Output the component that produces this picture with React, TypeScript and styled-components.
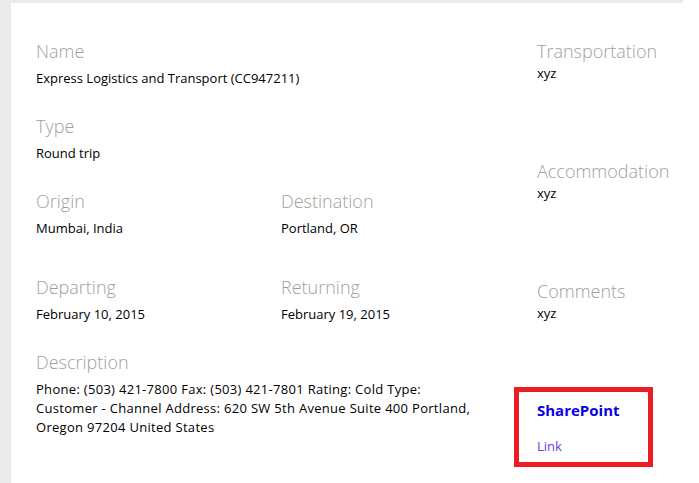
import React from "react";
import styled, { createGlobalStyle } from "styled-components";

const Global = createGlobalStyle`
  html, body { margin: 0; padding: 0; background: #ffffff; }
  body { font-family: "Open Sans", "Noto Sans", sans-serif; }
`;

const Backdrop = styled.div`
  width: 683px;
  height: 483px;
  box-sizing: border-box;
  padding: 3px 0 0 11px;
  background: #ebebeb;
`;

const Panel = styled.main`
  height: 100%;
  box-sizing: border-box;
  background: #ffffff;
  padding: 36px 0 0 25px;
  display: grid;
  grid-template-columns: 478px 1fr;
  align-items: start;
  overflow: visible;
`;

const LeftArea = styled.section`
  display: grid;
  grid-template-columns: 245px 1fr;
`;

const Row = styled.div<{ $top: number; $span?: boolean }>`
  grid-column: ${(p) => (p.$span ? "1 / span 2" : "auto")};
  margin-top: ${(p) => p.$top}px;
`;

const RightArea = styled.aside`
  display: flex;
  flex-direction: column;
  align-items: flex-start;
`;

const Field = styled.div<{ $top?: number }>`
  display: flex;
  flex-direction: column;
  margin-top: ${(p) => p.$top ?? 0}px;
`;

const RightField = styled(Field)`
  padding-left: 23px;
  white-space: nowrap;
`;

const Label = styled.div`
  font-size: 18px;
  line-height: 24px;
  font-weight: 300;
  color: #a09f9e;
`;

const Value = styled.div<{ $gap: number }>`
  margin-top: ${(p) => p.$gap}px;
  font-size: 13px;
  line-height: 19px;
  color: #000000;
`;

const Description = styled(Value)`
  max-width: 441px;
  letter-spacing: 0.3px;
`;

const LinkBox = styled.div`
  margin-top: 64px;
  width: 139px;
  height: 80px;
  box-sizing: border-box;
  border: 5px solid #ed1c24;
  padding: 8px 0 0 18px;
  display: flex;
  flex-direction: column;
`;

const BoxTitle = styled.div`
  font-size: 15px;
  line-height: 20px;
  font-weight: 700;
  color: #0a00e8;
`;

const BoxLink = styled.a`
  margin-top: 17px;
  font-size: 13px;
  line-height: 19px;
  color: #6a3ee8;
  text-decoration: none;
`;

type Pair = { label: string; value: string };

const LeftField = ({ label, value }: Pair) => (
  <Field>
    <Label>{label}</Label>
    <Value $gap={6}>{value}</Value>
  </Field>
);

export default function App() {
  return (
    <>
      <Global />
      <Backdrop>
        <Panel>
          <LeftArea>
            <Row $top={0} $span>
              <LeftField label="Name" value="Express Logistics and Transport (CC947211)" />
            </Row>
            <Row $top={26} $span>
              <LeftField label="Type" value="Round trip" />
            </Row>
            <Row $top={26}>
              <LeftField label="Origin" value="Mumbai, India" />
            </Row>
            <Row $top={26}>
              <LeftField label="Destination" value="Portland, OR" />
            </Row>
            <Row $top={37}>
              <LeftField label="Departing" value="February 10, 2015" />
            </Row>
            <Row $top={37}>
              <LeftField label="Returning" value="February 19, 2015" />
            </Row>
            <Row $top={26} $span>
              <Field>
                <Label>Description</Label>
                <Description $gap={6}>
                  Phone: (503) 421-7800 Fax: (503) 421-7801 Rating: Cold Type: Customer - Channel
                  Address: 620 SW 5th Avenue Suite 400 Portland, Oregon 97204 United States
                </Description>
              </Field>
            </Row>
          </LeftArea>
          <RightArea>
            <RightField $top={0}>
              <Label>Transportation</Label>
              <Value $gap={1}>xyz</Value>
            </RightField>
            <RightField $top={76}>
              <Label>Accommodation</Label>
              <Value $gap={1}>xyz</Value>
            </RightField>
            <RightField $top={76}>
              <Label>Comments</Label>
              <Value $gap={1}>xyz</Value>
            </RightField>
            <LinkBox>
              <BoxTitle>SharePoint</BoxTitle>
              <BoxLink href="#">Link</BoxLink>
            </LinkBox>
          </RightArea>
        </Panel>
      </Backdrop>
    </>
  );
}
